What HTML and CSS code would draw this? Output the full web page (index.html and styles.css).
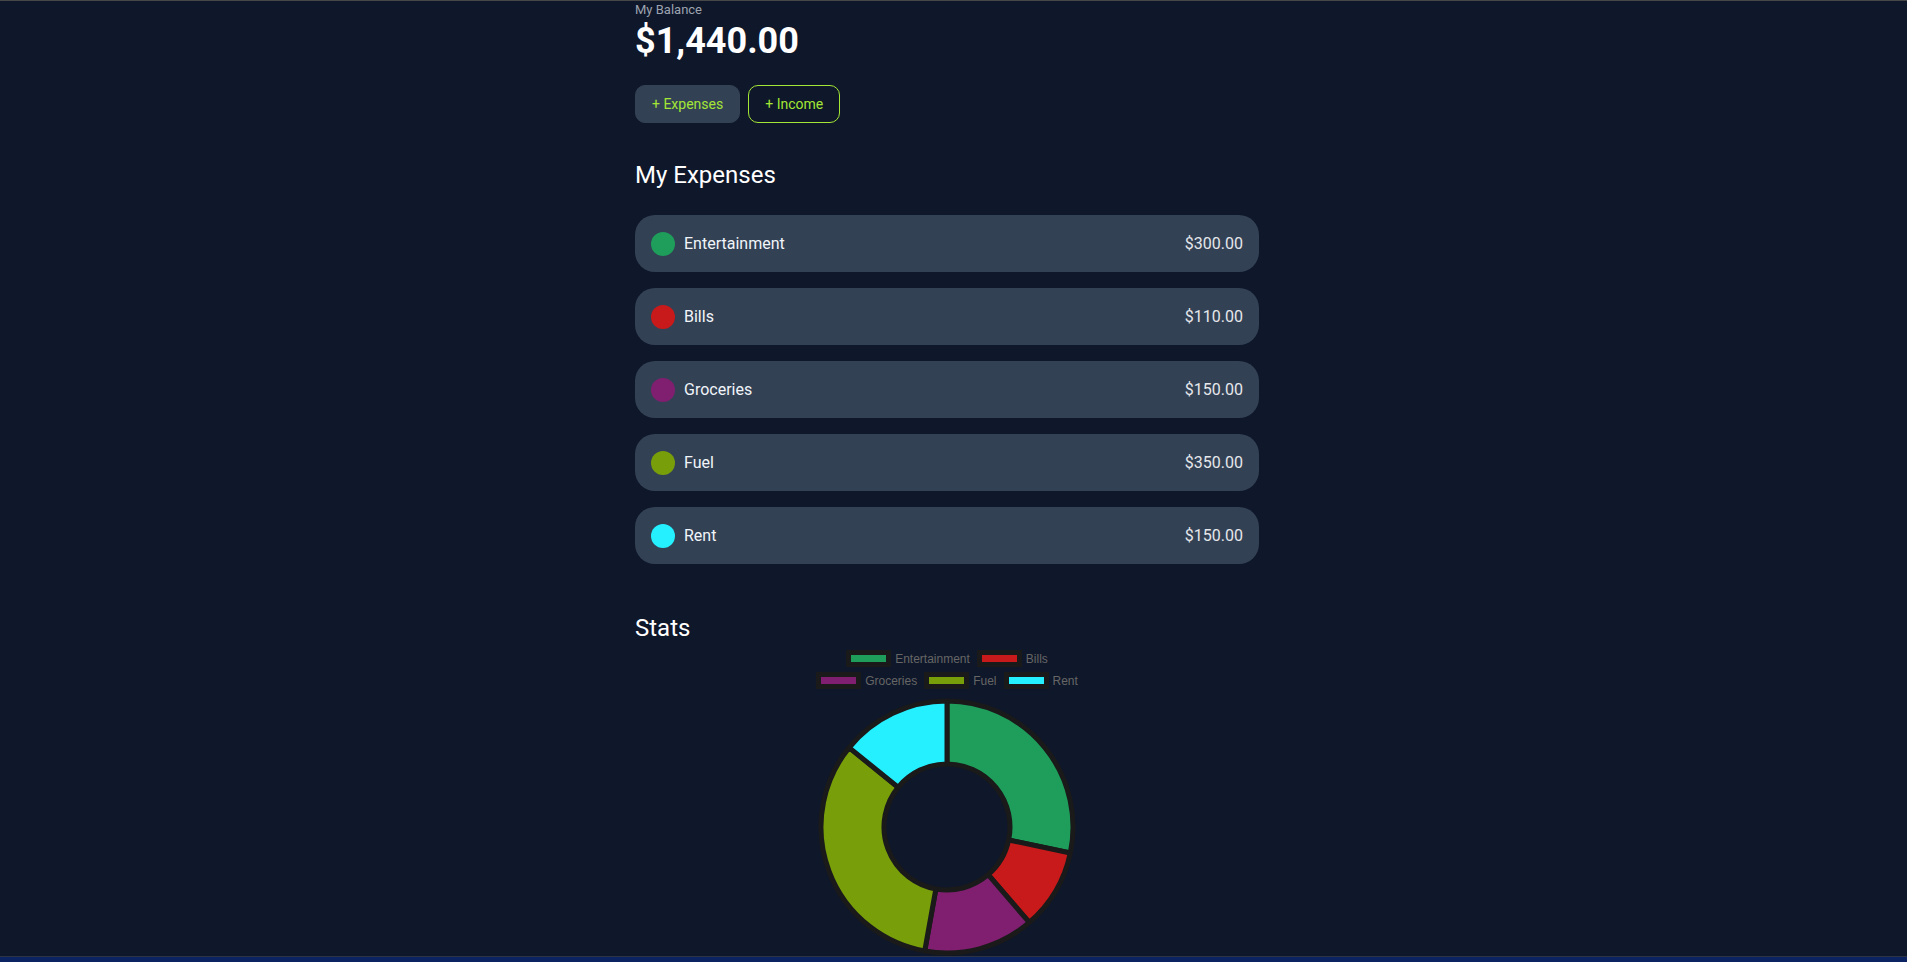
FILE: index.html
```html
<!DOCTYPE html>
<html lang="en">
<head>
<meta charset="utf-8">
<title>Budget</title>
<link rel="stylesheet" href="styles.css">
</head>
<body>
<div class="topline"></div>
<div class="page">
  <main class="wrap">
    <section class="balance">
      <div class="balance-label">My Balance</div>
      <div class="balance-amount">$1,440.00</div>
      <div class="actions">
        <button class="btn btn-fill">+ Expenses</button>
        <button class="btn btn-outline">+ Income</button>
      </div>
    </section>

    <h2 class="heading expenses-heading">My Expenses</h2>
    <ul class="expense-list">
      <li class="expense"><span class="dot c-ent"></span><span class="name">Entertainment</span><span class="amount">$300.00</span></li>
      <li class="expense"><span class="dot c-bills"></span><span class="name">Bills</span><span class="amount">$110.00</span></li>
      <li class="expense"><span class="dot c-groc"></span><span class="name">Groceries</span><span class="amount">$150.00</span></li>
      <li class="expense"><span class="dot c-fuel"></span><span class="name">Fuel</span><span class="amount">$350.00</span></li>
      <li class="expense"><span class="dot c-rent"></span><span class="name">Rent</span><span class="amount">$150.00</span></li>
    </ul>

    <h2 class="heading stats-heading">Stats</h2>
    <div class="chart">
      <div class="legend">
        <div class="legend-row">
          <span class="legend-item"><span class="swatch c-ent"></span><span class="legend-text">Entertainment</span></span>
          <span class="legend-item"><span class="swatch c-bills"></span><span class="legend-text">Bills</span></span>
        </div>
        <div class="legend-row">
          <span class="legend-item"><span class="swatch c-groc"></span><span class="legend-text">Groceries</span></span>
          <span class="legend-item"><span class="swatch c-fuel"></span><span class="legend-text">Fuel</span></span>
          <span class="legend-item"><span class="swatch c-rent"></span><span class="legend-text">Rent</span></span>
        </div>
      </div>
      <svg class="donut" width="262" height="262" viewBox="0 0 262 262">
        <g id="slices" stroke="#1a1a1a" stroke-width="5" stroke-linejoin="bevel"></g>
      </svg>
    </div>
  </main>
</div>
<div class="bottombar"></div>
<script src="chart.js"></script>
</body>
</html>
```

FILE: chart.js
```js
(function () {
  var data = [
    { v: 300, c: '#1e9e5a' },
    { v: 110, c: '#c81a1a' },
    { v: 150, c: '#801f70' },
    { v: 350, c: '#789e0a' },
    { v: 150, c: '#24f0ff' }
  ];
  var cx = 131, cy = 131, ro = 126, ri = 63;
  var total = data.reduce(function (s, d) { return s + d.v; }, 0);
  var g = document.getElementById('slices');
  var a = -Math.PI / 2;
  function pt(r, t) { return (cx + r * Math.cos(t)).toFixed(2) + ' ' + (cy + r * Math.sin(t)).toFixed(2); }
  data.forEach(function (d) {
    var b = a + d.v / total * Math.PI * 2;
    var large = (b - a) > Math.PI ? 1 : 0;
    var p = 'M ' + pt(ro, a) + ' A ' + ro + ' ' + ro + ' 0 ' + large + ' 1 ' + pt(ro, b) +
      ' L ' + pt(ri, b) + ' A ' + ri + ' ' + ri + ' 0 ' + large + ' 0 ' + pt(ri, a) + ' Z';
    var el = document.createElementNS('http://www.w3.org/2000/svg', 'path');
    el.setAttribute('d', p);
    el.setAttribute('fill', d.c);
    g.appendChild(el);
    a = b;
  });
})();
```

FILE: styles.css
```css
html, body {
  margin: 0;
  padding: 0;
  background: #0f172a;
}
body {
  font-family: Roboto, "Liberation Sans", Arial, sans-serif;
  color: #f8fafc;
  overflow: hidden;
  height: 962px;
}
.topline {
  height: 1px;
  background: #474747;
}
.page {
  display: flex;
  justify-content: center;
  padding-right: 13px;
}
.wrap {
  width: 624px;
}
.balance-label {
  font-size: 13px;
  line-height: 17px;
  color: #9ca3af;
}
.balance-amount {
  font-size: 36px;
  line-height: 40px;
  font-weight: 700;
  color: #ffffff;
  margin-top: 3px;
}
.actions {
  display: flex;
  gap: 8px;
  margin-top: 24px;
}
.btn {
  font-family: Roboto, "Liberation Sans", Arial, sans-serif;
  font-size: 14px;
  line-height: 20px;
  padding: 8px 16px;
  border-radius: 10px;
  color: #a3e635;
  cursor: pointer;
}
.btn-fill {
  background: #334155;
  border: 1px solid #334155;
}
.btn-outline {
  background: transparent;
  border: 1px solid #a3e635;
}
.heading {
  margin: 0;
  font-size: 24px;
  line-height: 32px;
  font-weight: 400;
  color: #ffffff;
}
.expenses-heading {
  margin-top: 36px;
}
.expense-list {
  list-style: none;
  margin: 24px 0 0;
  padding: 0;
  display: flex;
  flex-direction: column;
  gap: 16px;
}
.expense {
  display: flex;
  align-items: center;
  padding: 16px;
  background: #334155;
  border-radius: 20px;
  font-size: 16px;
  line-height: 25px;
  color: #f1f5f9;
}
.dot {
  width: 24px;
  height: 24px;
  border-radius: 50%;
  margin-right: 9px;
  flex: none;
}
.name {
  flex: 1;
}
.amount {
  color: #e5e7eb;
}
.c-ent { background: #1e9e5a; }
.c-bills { background: #c81a1a; }
.c-groc { background: #801f70; }
.c-fuel { background: #789e0a; }
.c-rent { background: #24f0ff; }

.stats-heading {
  margin-top: 48px;
}
.chart {
  display: flex;
  flex-direction: column;
  align-items: center;
}
.legend {
  margin-top: 6px;
  display: flex;
  flex-direction: column;
  gap: 5px;
  font-family: "Liberation Sans", Arial, sans-serif;
  font-size: 12px;
  color: #666666;
}
.legend-row {
  display: flex;
  justify-content: center;
  gap: 7px;
  height: 17px;
}
.legend-item {
  display: flex;
  align-items: center;
  gap: 4px;
}
.swatch {
  box-sizing: border-box;
  width: 45px;
  height: 17px;
  border: 5px solid #1a1a1a;
}
.legend-text {
  line-height: 14px;
}
.donut {
  display: block;
  margin-top: 7px;
}
.bottombar {
  position: fixed;
  left: 0;
  right: 0;
  bottom: 0;
  height: 5px;
  background: #0b2361;
  border-top: 1px solid #2d3344;
}
```
